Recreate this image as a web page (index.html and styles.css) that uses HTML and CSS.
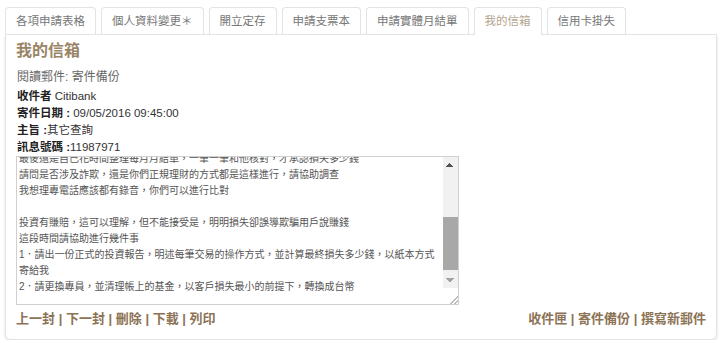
FILE: index.html
```html
<!DOCTYPE html>
<html lang="zh-Hant">
<head>
  <meta charset="UTF-8" />
  <meta name="viewport" content="width=device-width, initial-scale=1.0"/>
  <title>我的信箱</title>
  <link rel="stylesheet" href="styles.css">
</head>
<body>

  <div class="wrap">
    <!-- Tabs -->
    <ul class="tabs">
      <li><a href="#">各項申請表格</a></li>
      <li><a href="#">個人資料變更＊</a></li>
      <li><a href="#">開立定存</a></li>
      <li><a href="#">申請支票本</a></li>
      <li><a href="#">申請實體月結單</a></li>
      <li class="active"><a href="#">我的信箱</a></li>
      <li><a href="#">信用卡掛失</a></li>
    </ul>

    <!-- Mailbox panel -->
    <div class="panel">
      <h1>我的信箱</h1>
      <p class="sub">閱讀郵件: 寄件備份</p>

      <div class="info">
        <p><b>收件者</b> Citibank</p>
        <p><b>寄件日期 :</b> 09/05/2016 09:45:00</p>
        <p><b>主旨 :</b>其它查詢</p>
        <p><b>訊息號碼 :</b>11987971</p>
      </div>

      <!-- Message body with its scrollbar -->
      <div class="msgbox">
        <div class="msg" id="msg">最後還是自己花時間整理每月月結單，一筆一筆和他核對，才承認損失多少錢
請問是否涉及詐欺，還是你們正規理財的方式都是這樣進行，請協助調查
我想理專電話應該都有錄音，你們可以進行比對

投資有賺賠，這可以理解，但不能接受是，明明損失卻誤導欺騙用戶說賺錢
這段時間請協助進行幾件事
1．請出一份正式的投資報告，明述每筆交易的操作方式，並計算最終損失多少錢，以紙本方式寄給我
2．請更換專員，並清理帳上的基金，以客戶損失最小的前提下，轉換成台幣</div>
        <div class="scrollbar">
          <span class="sb-btn sb-up"></span>
          <span class="sb-track"><span class="sb-thumb" style="margin-top: 45px; height: 53px;"></span></span>
          <span class="sb-btn sb-down"></span>
          <span class="sb-corner"></span>
        </div>
      </div>

      <div class="actions">
        <div class="links">
          <a href="#">上一封</a> | <a href="#">下一封</a> | <a href="#">刪除</a> | <a href="#">下載</a> | <a href="#">列印</a>
        </div>
        <div class="links">
          <a href="#">收件匣</a> | <a href="#">寄件備份</a> | <a href="#">撰寫新郵件</a>
        </div>
      </div>
    </div>
  </div>

  <script src="script.js"></script>
</body>
</html>
```

FILE: styles.css
```css
body {
  margin: 0;
  background: #fff;
  font-family: "Liberation Sans", "Noto Sans CJK TC", sans-serif;
  color: #333;
}

.wrap {
  padding: 7px 3px 0 5px;
}

/* Tabs */
.tabs {
  list-style: none;
  margin: 0;
  padding: 0;
  display: flex;
  gap: 5px;
}

.tabs li {
  border: 1px solid #e3e3e3;
  border-bottom: none;
  border-radius: 4px 4px 0 0;
  background: #fff;
}

.tabs a {
  display: block;
  height: 26px;
  line-height: 26px;
  padding: 0 10px;
  font-size: 11.5px;
  color: #777;
  text-decoration: none;
}

.tabs li.active {
  position: relative;
  margin-bottom: -1px;
  padding-bottom: 1px;
}

.tabs li.active a {
  color: #b3a48e;
}

/* Panel */
.panel {
  border: 1px solid #e3e3e3;
  border-radius: 0 0 6px 6px;
  box-shadow: 0 2px 3px rgba(0, 0, 0, 0.12);
  padding: 6px 10px 11px 10px;
}

.panel h1 {
  margin: 0;
  font-size: 16px;
  line-height: 20px;
  color: #9a8466;
}

.sub {
  margin: 8px 0 2px 1px;
  font-size: 12px;
  line-height: 17px;
  color: #666;
}

.info {
  margin-left: 1px;
  font-size: 11.5px;
  line-height: 17px;
  color: #333;
}

.info p {
  margin: 0;
}

.info b {
  color: #222;
}

/* Message box */
.msgbox {
  display: flex;
  box-sizing: border-box;
  width: 443px;
  height: 149px;
  border: 1px solid #d0d0d0;
  background: #fff;
}

.msg {
  flex: 1;
  overflow: hidden;
  padding: 2px 2px 9px 2px;
  white-space: pre-wrap;
  font-size: 10px;
  line-height: 16px;
  color: #555;
}

.scrollbar {
  width: 15px;
  display: flex;
  flex-direction: column;
}

.sb-btn {
  height: 15px;
  background-color: #f1f1f1;
  background-repeat: no-repeat;
  background-size: 4px 4px;
}

.sb-up {
  background-image:
    linear-gradient(to bottom right, transparent 50%, #505050 50%),
    linear-gradient(to bottom left, transparent 50%, #505050 50%);
  background-position: 3px 6px, 7px 6px;
}

.sb-down {
  background-image:
    linear-gradient(to top right, transparent 50%, #a3a3a3 50%),
    linear-gradient(to top left, transparent 50%, #a3a3a3 50%);
  background-position: 3px 5px, 7px 5px;
}

.sb-track {
  flex: 1;
  background: #f1f1f1;
}

.sb-thumb {
  display: block;
  background: #a8a8a8;
}

.sb-corner {
  height: 16px;
  background:
    linear-gradient(135deg, transparent 72%, #bbb 72%, #bbb 78%, transparent 78%, transparent 86%, #bbb 86%, #bbb 92%, transparent 92%);
}

/* Bottom links */
.actions {
  display: flex;
  justify-content: space-between;
  margin-top: 5px;
  font-size: 13px;
  font-weight: bold;
  line-height: 18px;
  color: #8c7356;
}

.links a {
  color: #8c7356;
  text-decoration: none;
}

.links a:hover {
  text-decoration: underline;
}
```

FILE: script.js
```js
document.getElementById("msg").scrollTop = 8;
```
